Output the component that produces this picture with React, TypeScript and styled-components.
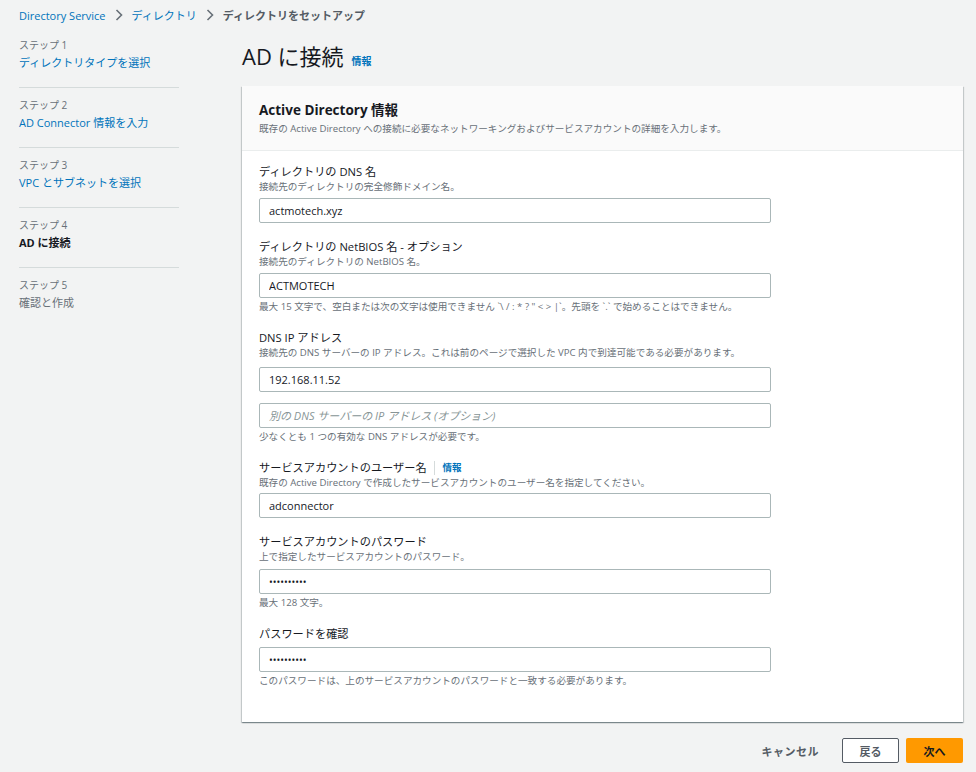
import React from 'react';
import styled, { createGlobalStyle } from 'styled-components';

const GlobalStyle = createGlobalStyle`
  html, body {
    margin: 0;
    padding: 0;
    background: #f2f3f3;
  }
  body {
    font-family: "Open Sans", "Noto Sans CJK JP", sans-serif;
    color: #16191f;
  }
  * {
    box-sizing: border-box;
  }
`;

const blue = '#0073bb';
const gray = '#687078';

const Page = styled.div`
  width: 976px;
  min-height: 772px;
  padding: 0 13px 0 19px;
`;

const Breadcrumbs = styled.nav`
  display: flex;
  align-items: center;
  height: 30px;
  gap: 9px;
  font-size: 11px;
`;

const Crumb = styled.span<{ $current?: boolean }>`
  color: ${(p) => (p.$current ? '#545b64' : blue)};
  font-weight: ${(p) => (p.$current ? 600 : 400)};
`;

const Chevron = () => (
  <svg width="8" height="12" viewBox="0 0 8 12" fill="none">
    <polyline points="1.5,1 6.5,6 1.5,11" stroke={gray} strokeWidth="1.6" />
  </svg>
);

const Layout = styled.div`
  display: flex;
  gap: 63px;
`;

const StepNav = styled.ul`
  list-style: none;
  margin: 0;
  padding: 0;
  width: 160px;
  flex-shrink: 0;
`;

const Step = styled.li`
  padding: 10px 0 16px;
  border-top: 1px solid #d5dbdb;

  &:first-child {
    padding-top: 8px;
    border-top: none;
  }
`;

const StepLabel = styled.div`
  font-size: 10px;
  line-height: 14px;
  color: ${gray};
`;

const StepTitle = styled.div<{ $state: 'link' | 'active' | 'disabled' }>`
  margin-top: 3px;
  font-size: 11px;
  line-height: 16px;
  font-weight: ${(p) => (p.$state === 'active' ? 700 : 400)};
  color: ${(p) =>
    p.$state === 'link' ? blue : p.$state === 'active' ? '#16191f' : gray};
`;

const Main = styled.main`
  width: 721px;
`;

const TitleRow = styled.div`
  display: flex;
  align-items: baseline;
  gap: 8px;
  margin-top: 12px;
  height: 28px;
`;

const PageTitle = styled.h1`
  margin: 0;
  font-size: 22px;
  line-height: 28px;
  font-weight: 400;
`;

const InfoLink = styled.a<{ $size?: number }>`
  color: ${blue};
  font-size: ${(p) => p.$size ?? 9.5}px;
  font-weight: 700;
  text-decoration: none;
`;

const Card = styled.section`
  margin-top: 16px;
  background: #fff;
  box-shadow: 0 1px 1px 0 rgba(0, 28, 36, 0.3),
    1px 1px 1px 0 rgba(0, 28, 36, 0.15), -1px 1px 1px 0 rgba(0, 28, 36, 0.15);
`;

const CardHeader = styled.header`
  background: #fafafa;
  border-bottom: 1px solid #eaeded;
  padding: 14px 17px 14px;
`;

const CardTitle = styled.h2`
  margin: 0;
  font-size: 13.5px;
  line-height: 20px;
  font-weight: 700;
`;

const CardDesc = styled.p`
  margin: 2px 0 0;
  font-size: 9.6px;
  line-height: 14px;
  color: ${gray};
`;

const CardBody = styled.div`
  display: flex;
  flex-direction: column;
  gap: 16px;
  padding: 13px 17px 34px;
`;

const Field = styled.div`
  display: flex;
  flex-direction: column;
  width: 512px;
`;

const LabelRow = styled.div`
  display: flex;
  align-items: center;
  font-size: 11.2px;
  line-height: 16px;
`;

const Divider = styled.span`
  width: 1px;
  height: 14px;
  background: #d5dbdb;
  margin: 0 8px 0 7px;
`;

const Hint = styled.div<{ $below?: boolean }>`
  margin-top: ${(p) => (p.$below ? '2px' : '0')};
  font-size: 9.6px;
  line-height: 14px;
  color: ${gray};
  white-space: nowrap;
`;

const Input = styled.input<{ $gap?: number }>`
  margin-top: ${(p) => p.$gap ?? 4}px;
  width: 100%;
  height: 25px;
  padding: 0 9px;
  border: 1px solid #aab7b8;
  border-radius: 2px;
  background: #fff;
  font-family: "Open Sans", "Noto Sans CJK JP", sans-serif;
  font-size: 11px;
  color: #16191f;
  outline: none;

  &[type='password'] {
    font-size: 10px;
  }

  &::placeholder {
    color: #879596;
    font-style: italic;
  }
`;

const Actions = styled.div`
  display: flex;
  justify-content: flex-end;
  align-items: center;
  gap: 7px;
  margin-top: 16px;
`;

const Button = styled.button<{ $variant: 'link' | 'normal' | 'primary' }>`
  height: 25px;
  min-width: 57px;
  padding: 0 ${(p) => (p.$variant === 'link' ? '15px' : '12px')};
  font-family: "Open Sans", "Noto Sans CJK JP", sans-serif;
  font-size: 11px;
  font-weight: 700;
  letter-spacing: ${(p) => (p.$variant === 'link' ? '0.5px' : '0')};
  border-radius: 2px;
  cursor: pointer;
  color: ${(p) => (p.$variant === 'primary' ? '#16191f' : '#545b64')};
  background: ${(p) =>
    p.$variant === 'primary' ? '#ff9900' : p.$variant === 'normal' ? '#fff' : 'transparent'};
  border: ${(p) => (p.$variant === 'normal' ? '1px solid #545b64' : '1px solid transparent')};
`;

const steps = [
  { label: 'ステップ 1', title: 'ディレクトリタイプを選択', state: 'link' as const },
  { label: 'ステップ 2', title: 'AD Connector 情報を入力', state: 'link' as const },
  { label: 'ステップ 3', title: 'VPC とサブネットを選択', state: 'link' as const },
  { label: 'ステップ 4', title: 'AD に接続', state: 'active' as const },
  { label: 'ステップ 5', title: '確認と作成', state: 'disabled' as const },
];

const App = () => {
  return (
    <Page>
      <GlobalStyle />
      <Breadcrumbs>
        <Crumb>Directory Service</Crumb>
        <Chevron />
        <Crumb>ディレクトリ</Crumb>
        <Chevron />
        <Crumb $current>ディレクトリをセットアップ</Crumb>
      </Breadcrumbs>
      <Layout>
        <StepNav>
          {steps.map((s) => (
            <Step key={s.label}>
              <StepLabel>{s.label}</StepLabel>
              <StepTitle $state={s.state}>{s.title}</StepTitle>
            </Step>
          ))}
        </StepNav>
        <Main>
          <TitleRow>
            <PageTitle>AD に接続</PageTitle>
            <InfoLink $size={10}>情報</InfoLink>
          </TitleRow>
          <Card>
            <CardHeader>
              <CardTitle>Active Directory 情報</CardTitle>
              <CardDesc>
                既存の Active Directory への接続に必要なネットワーキングおよびサービスアカウントの詳細を入力します。
              </CardDesc>
            </CardHeader>
            <CardBody>
              <Field>
                <LabelRow>ディレクトリの DNS 名</LabelRow>
                <Hint>接続先のディレクトリの完全修飾ドメイン名。</Hint>
                <Input defaultValue="actmotech.xyz" />
              </Field>
              <Field>
                <LabelRow>ディレクトリの NetBIOS 名 - オプション</LabelRow>
                <Hint>接続先のディレクトリの NetBIOS 名。</Hint>
                <Input $gap={4} defaultValue="ACTMOTECH" />
                <Hint $below>
                  最大 15 文字で、空白または次の文字は使用できません `\ / : * ? " &lt; &gt; |`。先頭を `.` で始めることはできません。
                </Hint>
              </Field>
              <Field>
                <LabelRow>DNS IP アドレス</LabelRow>
                <Hint>
                  接続先の DNS サーバーの IP アドレス。これは前のページで選択した VPC 内で到達可能である必要があります。
                </Hint>
                <Input $gap={7} defaultValue="192.168.11.52" />
                <Input $gap={11} placeholder="別の DNS サーバーの IP アドレス (オプション)" />
                <Hint $below>少なくとも 1 つの有効な DNS アドレスが必要です。</Hint>
              </Field>
              <Field>
                <LabelRow>
                  サービスアカウントのユーザー名
                  <Divider />
                  <InfoLink>情報</InfoLink>
                </LabelRow>
                <Hint>既存の Active Directory で作成したサービスアカウントのユーザー名を指定してください。</Hint>
                <Input $gap={3} defaultValue="adconnector" />
              </Field>
              <Field>
                <LabelRow>サービスアカウントのパスワード</LabelRow>
                <Hint>上で指定したサービスアカウントのパスワード。</Hint>
                <Input $gap={5} type="password" defaultValue="actmotech1" />
                <Hint $below>最大 128 文字。</Hint>
              </Field>
              <Field>
                <LabelRow>パスワードを確認</LabelRow>
                <Input $gap={5} type="password" defaultValue="actmotech1" />
                <Hint $below>このパスワードは、上のサービスアカウントのパスワードと一致する必要があります。</Hint>
              </Field>
            </CardBody>
          </Card>
          <Actions>
            <Button $variant="link">キャンセル</Button>
            <Button $variant="normal">戻る</Button>
            <Button $variant="primary">次へ</Button>
          </Actions>
        </Main>
      </Layout>
    </Page>
  );
};

export default App;
